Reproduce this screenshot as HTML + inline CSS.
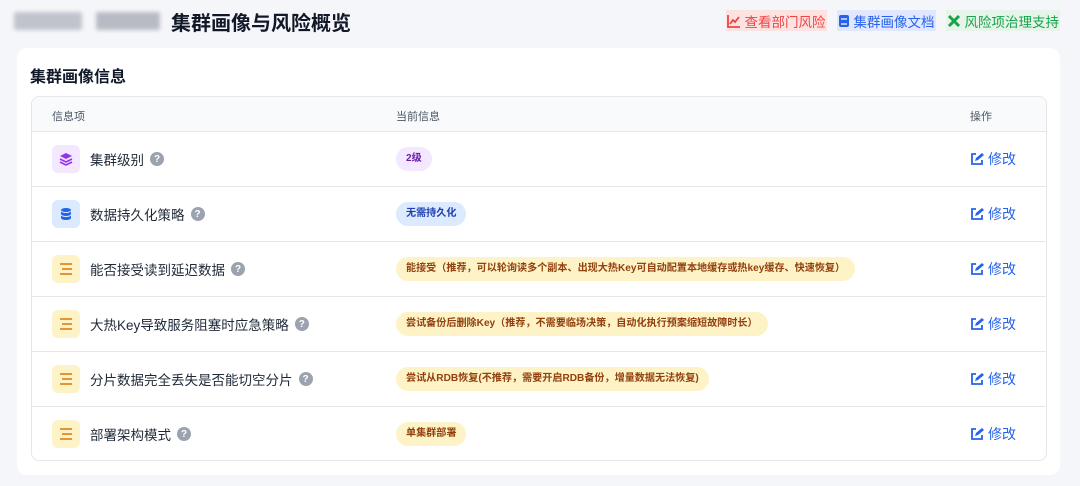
<!DOCTYPE html><html><head><meta charset="utf-8"><style>
*{box-sizing:border-box;margin:0;padding:0}
body{width:1080px;height:486px;background:#f5f6f9;font-family:"Liberation Sans","Noto Sans CJK SC",sans-serif;position:relative;overflow:hidden;color:#1f2937}
.blur{position:absolute;top:12px;height:18px;background:#9ca3af;filter:blur(2px);border-radius:2px}
h1{position:absolute;left:171px;top:7px;font-size:20px;font-weight:700;color:#111827}
.links{position:absolute;top:10px;right:20px;display:flex;gap:10px;font-size:13.5px}
.links span{display:flex;align-items:center;gap:4px;padding:0 1px;height:21px}
.card{position:absolute;left:17px;top:48px;width:1043px;height:427px;background:#fff;border-radius:10px}
.card h2{position:absolute;left:13px;top:15px;font-size:16px;font-weight:700;color:#111827}
.tbl{position:absolute;left:14px;top:48px;width:1016px;height:365px;border:1px solid #e5e7eb;border-radius:8px;overflow:hidden}
.hd{height:35px;background:#f9fafb;border-bottom:1px solid #e5e7eb;font-size:11px;color:#4b5563;position:relative}
.hd span{position:absolute;top:11px}
.row{height:55px;border-bottom:1px solid #e5e7eb;position:relative}
.row:last-child{border-bottom:none}
.ic{position:absolute;left:20px;top:13px;width:28px;height:28px;border-radius:6px;display:flex;align-items:center;justify-content:center}
.nm{position:absolute;left:58px;top:17px;font-size:13.5px;color:#1f2937;display:flex;align-items:center;gap:6px}
.q{width:14px;height:14px;border-radius:50%;background:#9ca3af;color:#fff;font-size:10px;font-weight:700;display:inline-flex;align-items:center;justify-content:center}
.bd{position:absolute;left:364px;top:15px;height:24px;border-radius:12px;padding:0 10px;font-size:10.1px;font-weight:700;line-height:24px}
.ed{position:absolute;left:938px;top:17px;font-size:14px;color:#2563eb;display:flex;align-items:center;gap:4px}
.am{background:#fef3c7;color:#92400e}
</style></head><body>
<div class="blur" style="left:14px;width:68px;opacity:.6"></div>
<div class="blur" style="left:96px;width:64px;opacity:.7"></div>
<h1>集群画像与风险概览</h1>
<div class="links">
<span style="background:#fde2e2;color:#ef4444"><svg width="14" height="14" viewBox="0 0 14 14"><path d="M1 1v12h12M3 10l3-4 2 2 4-5" stroke="#ef4444" stroke-width="1.8" fill="none"/></svg>查看部门风险</span>
<span style="background:#e0e7ff;color:#2563eb"><svg width="12" height="14" viewBox="0 0 12 14"><rect x="1" y="1" width="10" height="12" rx="2" fill="#2563eb"/><path d="M3 5h6M3 10h6" stroke="#fff" stroke-width="1.2"/></svg>集群画像文档</span>
<span style="background:#e6f4ea;color:#16a34a"><svg width="14" height="14" viewBox="0 0 14 14"><path d="M2 2l10 10M12 2L2 12" stroke="#16a34a" stroke-width="3"/></svg>风险项治理支持</span>
</div>
<div class="card"><h2>集群画像信息</h2>
<div class="tbl">
<div class="hd"><span style="left:20px">信息项</span><span style="left:364px">当前信息</span><span style="left:938px">操作</span></div>
<div class="row"><div class="ic" style="background:#f3e8ff"><svg width="14" height="14" viewBox="0 0 14 14"><path d="M7 1l6 3-6 3-6-3z" fill="#9333ea"/><path d="M1 7l6 3 6-3M1 10l6 3 6-3" stroke="#9333ea" stroke-width="1.6" fill="none"/></svg></div><div class="nm">集群级别 <span class="q">?</span></div><div class="bd" style="background:#f3e8ff;color:#6b21a8">2级</div><div class="ed"><svg width="14" height="14" viewBox="0 0 14 14"><path d="M6 2H2v10h10V8" stroke="#2563eb" stroke-width="1.8" fill="none"/><path d="M5 9l1-3 6-5 2 2-6 5z" fill="#2563eb"/></svg>修改</div></div>
<div class="row"><div class="ic" style="background:#dbeafe"><svg width="14" height="14" viewBox="0 0 14 14"><ellipse cx="7" cy="3" rx="5" ry="2" fill="#2563eb"/><path d="M2 4v7c0 1 2 2 5 2s5-1 5-2V4c0 1-2 2-5 2S2 5 2 4z" fill="#2563eb"/><path d="M2 7.5c0 1 2 2 5 2s5-1 5-2" stroke="#dbeafe" fill="none"/></svg></div><div class="nm">数据持久化策略 <span class="q">?</span></div><div class="bd" style="background:#dbeafe;color:#1e40af">无需持久化</div><div class="ed"><svg width="14" height="14" viewBox="0 0 14 14"><path d="M6 2H2v10h10V8" stroke="#2563eb" stroke-width="1.8" fill="none"/><path d="M5 9l1-3 6-5 2 2-6 5z" fill="#2563eb"/></svg>修改</div></div>
<div class="row"><div class="ic am"><svg width="14" height="12" viewBox="0 0 14 12"><path d="M1 1h12M3 6h10M1 11h12" stroke="#d97706" stroke-width="1.6"/></svg></div><div class="nm">能否接受读到延迟数据 <span class="q">?</span></div><div class="bd am">能接受（推荐，可以轮询读多个副本、出现大热Key可自动配置本地缓存或热key缓存、快速恢复）</div><div class="ed"><svg width="14" height="14" viewBox="0 0 14 14"><path d="M6 2H2v10h10V8" stroke="#2563eb" stroke-width="1.8" fill="none"/><path d="M5 9l1-3 6-5 2 2-6 5z" fill="#2563eb"/></svg>修改</div></div>
<div class="row"><div class="ic am"><svg width="14" height="12" viewBox="0 0 14 12"><path d="M1 1h12M3 6h10M1 11h12" stroke="#d97706" stroke-width="1.6"/></svg></div><div class="nm">大热Key导致服务阻塞时应急策略 <span class="q">?</span></div><div class="bd am">尝试备份后删除Key（推荐，不需要临场决策，自动化执行预案缩短故障时长）</div><div class="ed"><svg width="14" height="14" viewBox="0 0 14 14"><path d="M6 2H2v10h10V8" stroke="#2563eb" stroke-width="1.8" fill="none"/><path d="M5 9l1-3 6-5 2 2-6 5z" fill="#2563eb"/></svg>修改</div></div>
<div class="row"><div class="ic am"><svg width="14" height="12" viewBox="0 0 14 12"><path d="M1 1h12M3 6h10M1 11h12" stroke="#d97706" stroke-width="1.6"/></svg></div><div class="nm">分片数据完全丢失是否能切空分片 <span class="q">?</span></div><div class="bd am">尝试从RDB恢复(不推荐，需要开启RDB备份，增量数据无法恢复)</div><div class="ed"><svg width="14" height="14" viewBox="0 0 14 14"><path d="M6 2H2v10h10V8" stroke="#2563eb" stroke-width="1.8" fill="none"/><path d="M5 9l1-3 6-5 2 2-6 5z" fill="#2563eb"/></svg>修改</div></div>
<div class="row"><div class="ic am"><svg width="14" height="12" viewBox="0 0 14 12"><path d="M1 1h12M3 6h10M1 11h12" stroke="#d97706" stroke-width="1.6"/></svg></div><div class="nm">部署架构模式 <span class="q">?</span></div><div class="bd am">单集群部署</div><div class="ed"><svg width="14" height="14" viewBox="0 0 14 14"><path d="M6 2H2v10h10V8" stroke="#2563eb" stroke-width="1.8" fill="none"/><path d="M5 9l1-3 6-5 2 2-6 5z" fill="#2563eb"/></svg>修改</div></div>
</div></div>
</body></html>
